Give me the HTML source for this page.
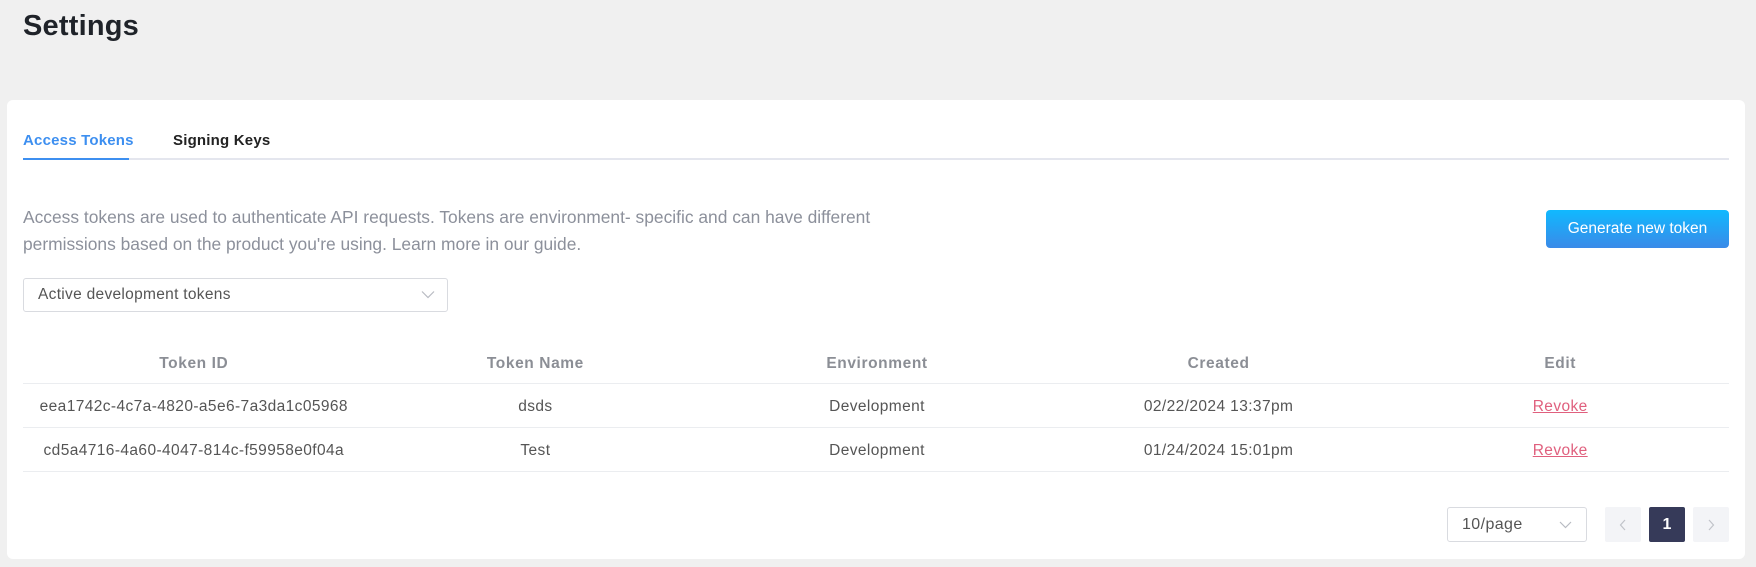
<!DOCTYPE html>
<html><head><meta charset="utf-8"><style>
*{box-sizing:border-box;margin:0;padding:0}
body{width:1756px;height:567px;background:#f0f0f0;font-family:"Liberation Sans",sans-serif;position:relative;overflow:hidden}
.abs{position:absolute}
h1{position:absolute;left:23px;top:10px;font-size:29px;font-weight:600;color:#1f2329;letter-spacing:0.2px}
.card{position:absolute;left:7px;top:100px;width:1738px;height:459px;background:#fff;border-radius:6px}
.tabline{left:23px;top:158px;width:1706px;height:2px;background:#e4e6ee}
.tabul{left:23px;top:158px;width:106px;height:2px;background:#3d8ff0}
.tab{top:131px;font-size:15px;font-weight:600;line-height:20px;letter-spacing:0.2px}
.desc{left:23px;top:204px;font-size:17.4px;line-height:27px;color:#8c909b}
.sel{left:23px;top:278px;width:425px;height:34px;border:1px solid #d9dbe0;border-radius:3px;font-size:15.5px;color:#555;padding:7px 14px;letter-spacing:0.3px}
.btn{left:1546px;top:210px;width:183px;height:38px;border-radius:4px;background:linear-gradient(#10b9ff,#3a8ae8);color:#fff;font-size:15.5px;text-align:center;line-height:38px}
.th,.td{position:absolute;width:341.6px;text-align:center;font-size:15.5px;letter-spacing:0.4px}
.th{color:#8b8e95;top:355px;font-weight:600;letter-spacing:0.6px}
.td{color:#555}
.rl{left:23px;width:1706px;height:1px;background:#ebedf0}
.rv{color:#e0607e;text-decoration:underline}
.pg{top:507px;width:36px;height:35px;border-radius:2px;background:#f3f4f7;color:#bbb;text-align:center;line-height:35px;font-size:16px}
</style></head><body>
<h1>Settings</h1>
<div class="card"></div>
<div class="abs tabline"></div>
<div class="abs tabul"></div>
<div class="abs tab" style="left:23px;color:#3d8ff0">Access Tokens</div>
<div class="abs tab" style="left:173px;color:#222">Signing Keys</div>
<div class="abs desc">Access tokens are used to authenticate API requests. Tokens are environment- specific and can have different<br>permissions based on the product you're using. Learn more in our guide.</div>
<div class="abs sel">Active development tokens</div>
<svg class="abs" style="left:421px;top:290px" width="14" height="9" viewBox="0 0 14 9"><path d="M1 1.5l6 6 6-6" fill="none" stroke="#b8bbc2" stroke-width="1.2"/></svg>
<div class="abs btn">Generate new token</div>

<div class="th" style="left:23px">Token ID</div>
<div class="th" style="left:364.6px">Token Name</div>
<div class="th" style="left:706.2px">Environment</div>
<div class="th" style="left:1047.8px">Created</div>
<div class="th" style="left:1389.4px">Edit</div>
<div class="abs rl" style="top:383px"></div>
<div class="td" style="left:23px;top:398px">eea1742c-4c7a-4820-a5e6-7a3da1c05968</div>
<div class="td" style="left:364.6px;top:398px">dsds</div>
<div class="td" style="left:706.2px;top:398px">Development</div>
<div class="td" style="left:1047.8px;top:398px">02/22/2024 13:37pm</div>
<div class="td" style="left:1389.4px;top:398px"><span class="rv">Revoke</span></div>
<div class="abs rl" style="top:427px"></div>
<div class="td" style="left:23px;top:442px">cd5a4716-4a60-4047-814c-f59958e0f04a</div>
<div class="td" style="left:364.6px;top:442px">Test</div>
<div class="td" style="left:706.2px;top:442px">Development</div>
<div class="td" style="left:1047.8px;top:442px">01/24/2024 15:01pm</div>
<div class="td" style="left:1389.4px;top:442px"><span class="rv">Revoke</span></div>
<div class="abs rl" style="top:471px"></div>

<div class="abs" style="left:1447px;top:507px;width:140px;height:35px;border:1px solid #d9dbe0;border-radius:3px;font-size:16px;color:#555;padding:8px 14px;letter-spacing:0.4px">10/page</div>
<svg class="abs" style="left:1559px;top:521px" width="13" height="8" viewBox="0 0 13 8"><path d="M1 1l5.5 5.5L12 1" fill="none" stroke="#b8bbc2" stroke-width="1.2"/></svg>
<div class="abs pg" style="left:1605px"><svg width="8" height="12" viewBox="0 0 8 12" style="margin-top:12px"><path d="M6 1L1.5 6 6 11" fill="none" stroke="#c0c3c9" stroke-width="1.2"/></svg></div>
<div class="abs pg" style="left:1649px;background:#363a59;color:#fff;font-weight:700">1</div>
<div class="abs pg" style="left:1693px"><svg width="8" height="12" viewBox="0 0 8 12" style="margin-top:12px"><path d="M2 1l4.5 5L2 11" fill="none" stroke="#c0c3c9" stroke-width="1.2"/></svg></div>
</body></html>
